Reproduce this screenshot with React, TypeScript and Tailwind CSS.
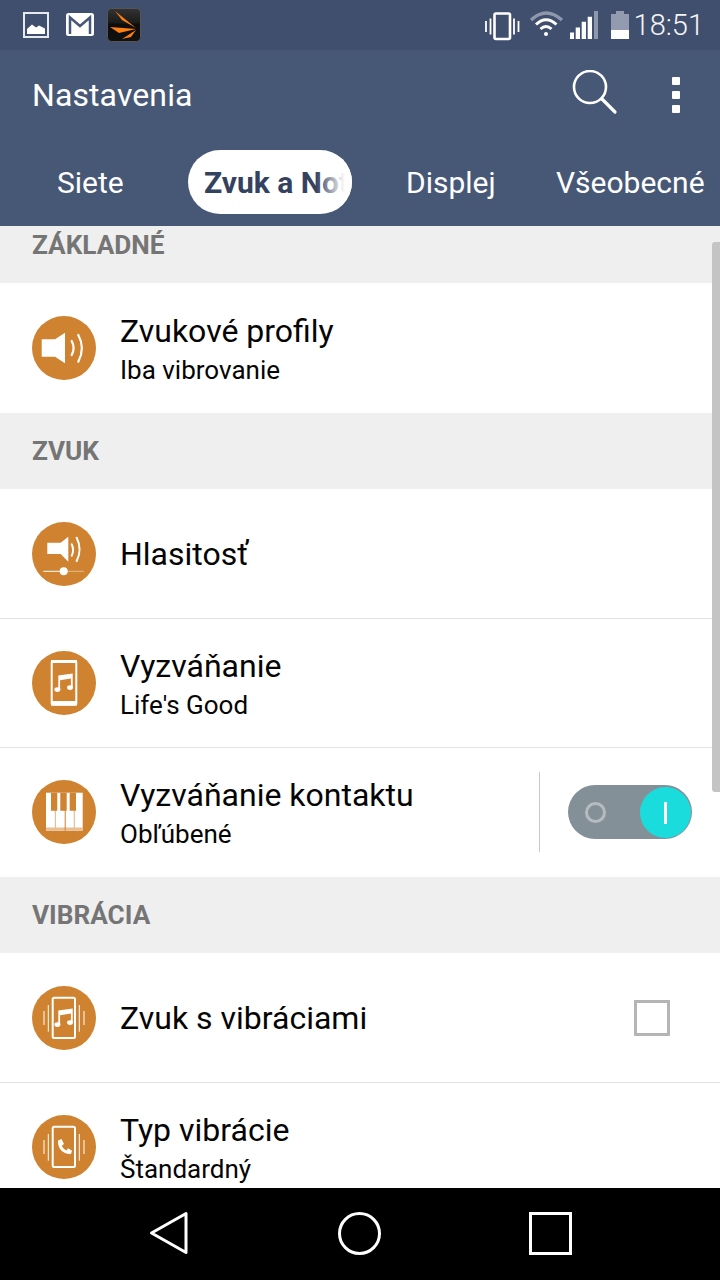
import type { ReactNode } from 'react'

function Disc({ children }: { children: ReactNode }) {
  return (
    <svg width="64" height="64" viewBox="0 0 64 64" className="shrink-0">
      <circle cx="32" cy="32" r="32" fill="#cf822f" />
      {children}
    </svg>
  )
}

const SpeakerIcon = () => (
  <Disc>
    <path d="M9.7 23.3H23L33 16.7V47.3L23 40.7H9.7Z" fill="#fff" />
    <path d="M39.7 25Q43.5 32 39.7 39M46.3 19Q53.5 32 46.3 45.7" fill="none" stroke="#fff" strokeWidth="2.2" strokeLinecap="round" />
  </Disc>
)

const VolumeIcon = () => (
  <Disc>
    <path d="M15.3 20.7H28.7L36.3 14.7V39.7L28.7 32H15.3Z" fill="#fff" />
    <path d="M39.7 22.3Q42.5 28 39.7 33.7M44.7 15.7Q50.5 27.5 44.7 39" fill="none" stroke="#fff" strokeWidth="2" strokeLinecap="round" />
    <path d="M11.3 49.3H32" stroke="#fff" strokeWidth="1" />
    <path d="M32 49.3H52" stroke="#fff" strokeOpacity=".45" strokeWidth="1" />
    <circle cx="31.7" cy="49.3" r="4" fill="#fff" />
  </Disc>
)

const Note = () => (
  <g fill="#fff">
    <path d="M26.3 24.5L40.7 22.5V36.5H38.9V27.6L28.1 29.2V38.5H26.3Z" />
    <ellipse cx="25.4" cy="38.6" rx="3" ry="2.4" />
    <ellipse cx="38" cy="36.6" rx="3" ry="2.4" />
  </g>
)

const RingIcon = () => (
  <Disc>
    <rect x="19.7" y="10" width="24.6" height="43.7" rx="1.5" fill="none" stroke="#fff" strokeWidth="2" />
    <path d="M19 50H45V54.5H19Z" fill="#fff" />
    <path d="M19 9H45V12H19Z" fill="#fff" />
    <Note />
  </Disc>
)

const PianoIcon = () => (
  <Disc>
    <rect x="14" y="12.7" width="36.7" height="38" fill="#fff" />
    <path d="M14 47.4H50.7V50.7H14Z" fill="#e8bf93" />
    <path d="M32.7 30H33.7V50.7H32.7Z" fill="#cf822f" />
    <path d="M22.8 30H24V50.7H22.8ZM41.7 30H42.9V50.7H41.7Z" fill="#e8bf93" />
    <path d="M19 12.7H25.3V30.7H19ZM28.3 12.7H34.7V30.7H28.3ZM37.7 12.7H44V30.7H37.7Z" fill="#cf822f" />
  </Disc>
)

const VibrateFrame = ({ children }: { children: ReactNode }) => (
  <Disc>
    <rect x="20.7" y="11.7" width="22.3" height="40.3" rx="1.5" fill="none" stroke="#fff" strokeWidth="2" />
    <path d="M16.3 19V45.7M47.3 19V45.7M12 25V39M52 25V39" stroke="#fff" strokeWidth="1" />
    {children}
  </Disc>
)

const Toggle = () => (
  <div className="relative w-[124px] h-[54px] rounded-full bg-[#849097] shrink-0 mr-[28px]">
    <div className="absolute left-[17px] top-[17px] w-[21px] h-[21px] rounded-full border-[3px] border-[#b4bcc0]" />
    <div className="absolute right-[1px] top-[2px] w-[51px] h-[51px] rounded-full bg-[#1bdcdc] flex items-center justify-center">
      <div className="w-[3px] h-[22px] bg-white" />
    </div>
  </div>
)

const SectionHeader = ({ label, className = '' }: { label: string; className?: string }) => (
  <div className={`h-[76px] shrink-0 bg-[#efefef] flex items-center pl-[32px] pt-[2px] text-[26.2px] font-bold text-[#757575] ${className}`}>
    {label}
  </div>
)

function Row({
  icon,
  title,
  sub,
  right,
  className = 'h-[129px]',
  border = true,
}: {
  icon: ReactNode
  title: string
  sub?: string
  right?: ReactNode
  className?: string
  border?: boolean
}) {
  return (
    <div className={`shrink-0 bg-white flex items-center pl-[32px] ${border ? 'border-b border-[#e2e2e2]' : ''} ${className}`}>
      {icon}
      <div className="flex-1 pl-[24px] min-w-0">
        <div className="text-[32px] leading-[40px] text-[#050505]">{title}</div>
        {sub && <div className="text-[26px] leading-[32px] mt-[3px] text-[#050505]">{sub}</div>}
      </div>
      {right}
    </div>
  )
}

function StatusIcons() {
  return (
    <svg width="532" height="50" viewBox="0 0 532 50" className="absolute left-0 top-0">
      <rect x="24" y="13" width="24" height="24" fill="none" stroke="#e6e9ee" strokeWidth="2" />
      <path d="M27 34V29L32 24.5L36 27.5L39 25.5L45 28.5V34Z" fill="#fff" />
      <rect x="66" y="13" width="28" height="23" rx="2.5" fill="#fff" />
      <path d="M70 34V17.5L80 26L90 17.5V34" fill="none" stroke="#475877" strokeWidth="2.5" />
    </svg>
  )
}

function AppBadge() {
  return (
    <svg width="34" height="34" viewBox="0 0 34 34" className="absolute left-[107px] top-[8px]">
      <defs>
        <linearGradient id="badge" x1="0" y1="0" x2="0" y2="1">
          <stop offset="0" stopColor="#333" />
          <stop offset=".45" stopColor="#1a1a1a" />
          <stop offset=".46" stopColor="#0d0d0d" />
          <stop offset="1" stopColor="#111" />
        </linearGradient>
      </defs>
      <rect x=".5" y=".5" width="33" height="33" rx="4" fill="url(#badge)" stroke="#555" />
      <path d="M8 3L29 20L15 12Z" fill="#ff7f10" />
      <path d="M3 19L29 21L12 25Z" fill="#ff7f10" />
      <path d="M15 31L29 22L24 29Z" fill="#ff7f10" />
    </svg>
  )
}

function StatusRight() {
  return (
    <div className="relative flex items-center h-full pr-[16px] justify-end">
      <svg width="146" height="50" viewBox="486 0 146 50">
        <rect x="495.5" y="13.5" width="15.5" height="25.5" rx="1.5" fill="none" stroke="#fff" strokeWidth="2.6" />
        <path d="M487 21V32M491.5 18.5V34.5M515 18.5V34.5M519.5 21V32" stroke="#fff" strokeWidth="1.8" />
        <path d="M532 20Q547 6 563 20" fill="none" stroke="#8e97ab" strokeWidth="3.5" />
        <path d="M537 24.5Q547 15 557.5 24.5" fill="none" stroke="#fff" strokeWidth="3" />
        <path d="M541.5 29Q547 24 552.5 29" fill="none" stroke="#fff" strokeWidth="3" />
        <circle cx="547" cy="34" r="2" fill="#fff" />
        <path d="M571 32.5H575V39H571ZM576.7 27.5H581V39H576.7ZM582.7 21.7H587V39H582.7ZM588.7 16.7H593V39H588.7Z" fill="#fff" />
        <path d="M595 11H599V39H595Z" fill="#8e97ab" />
        <path d="M612 14H617V11H625V14H630V30H612Z" fill="#929bb0" />
        <path d="M612 30H630V39H612Z" fill="#fff" />
      </svg>
      <span className="ml-[3px] text-[29px] font-light text-[#f4f5f7] leading-none">18:51</span>
    </div>
  )
}

export default function App() {
  return (
    <div className="w-[720px] h-[1280px] flex flex-col overflow-hidden bg-white font-['Roboto',sans-serif]">
      <div className="relative h-[50px] shrink-0 bg-[#414f6e]">
        <StatusIcons />
        <AppBadge />
        <StatusRight />
      </div>

      <div className="h-[176px] shrink-0 bg-[#475877] flex flex-col text-white">
        <div className="h-[90px] shrink-0 flex items-center pl-[32px] pr-[40px]">
          <span className="flex-1 text-[32px] tracking-[0.1px]">Nastavenia</span>
          <svg width="50" height="50" viewBox="0 0 50 50" className="mr-[53px]">
            <circle cx="21" cy="17" r="16" fill="none" stroke="#fff" strokeWidth="2.6" />
            <path d="M33 29L46 42" stroke="#fff" strokeWidth="3.2" strokeLinecap="round" />
          </svg>
          <div className="flex flex-col gap-[6px]">
            <div className="w-[8px] h-[8px] rounded-[1px] bg-white" />
            <div className="w-[8px] h-[8px] rounded-[1px] bg-white" />
            <div className="w-[8px] h-[8px] rounded-[1px] bg-white" />
          </div>
        </div>
        <div className="mt-[10px] h-[64px] flex items-center pl-[57px] text-[30px] whitespace-nowrap">
          <span className="w-[131px]">Siete</span>
          <div className="relative w-[164px] h-[64px] rounded-full bg-white flex items-center overflow-hidden pl-[16px] font-bold text-[#34425f]">
            Zvuk a Not
            <div className="absolute right-0 top-0 h-full w-[36px] bg-gradient-to-r from-white/0 to-white to-80%" />
          </div>
          <span className="ml-[54px] w-[150px]">Displej</span>
          <span>Všeobecné</span>
        </div>
      </div>

      <div className="relative flex-1 min-h-0 overflow-hidden flex flex-col">
        <SectionHeader label="ZÁKLADNÉ" className="-mt-[19px]" />
        <Row icon={<SpeakerIcon />} title="Zvukové profily" sub="Iba vibrovanie" className="h-[130px]" border={false} />
        <SectionHeader label="ZVUK" />
        <Row icon={<VolumeIcon />} title="Hlasitosť" className="h-[130px]" />
        <Row icon={<RingIcon />} title="Vyzváňanie" sub="Life's Good" />
        <Row
          icon={<PianoIcon />}
          title="Vyzváňanie kontaktu"
          sub="Obľúbené"
          border={false}
          className="h-[129px] pb-[1px]"
          right={
            <div className="flex items-center">
              <div className="w-px h-[80px] bg-[#c8c8c8] mr-[28px]" />
              <Toggle />
            </div>
          }
        />
        <SectionHeader label="VIBRÁCIA" />
        <Row
          icon={
            <VibrateFrame>
              <Note />
            </VibrateFrame>
          }
          title="Zvuk s vibráciami"
          className="h-[130px]"
          right={<div className="w-[36px] h-[36px] border-[3px] border-[#b5b5b5] mr-[50px]" />}
        />
        <Row
          icon={
            <VibrateFrame>
              <path d="M26 25.5L29.5 24L32 29L29.8 30.8C30.8 33 32.2 34.4 34.4 35.4L36.2 33.2L40 35.7L39 39C31 39.5 25.5 33.5 26 25.5Z" fill="#fff" />
            </VibrateFrame>
          }
          title="Typ vibrácie"
          sub="Štandardný"
          className="h-[128px]"
          border={false}
        />
        <div className="absolute right-0 top-[16px] w-[8px] h-[550px] rounded-l-[3px] bg-[#c4c4c4]" />
      </div>

      <div className="h-[92px] shrink-0 bg-black flex items-center justify-between pl-[149px] pr-[148px] pb-[2px]">
        <svg width="40" height="46" viewBox="0 0 40 46">
          <path d="M2.5 23L37 3.5V42.5Z" fill="none" stroke="#fff" strokeWidth="3" strokeLinejoin="round" />
        </svg>
        <div className="w-[43px] h-[43px] rounded-full border-[3px] border-white" />
        <div className="w-[43px] h-[43px] border-[3px] border-white" />
      </div>
    </div>
  )
}
